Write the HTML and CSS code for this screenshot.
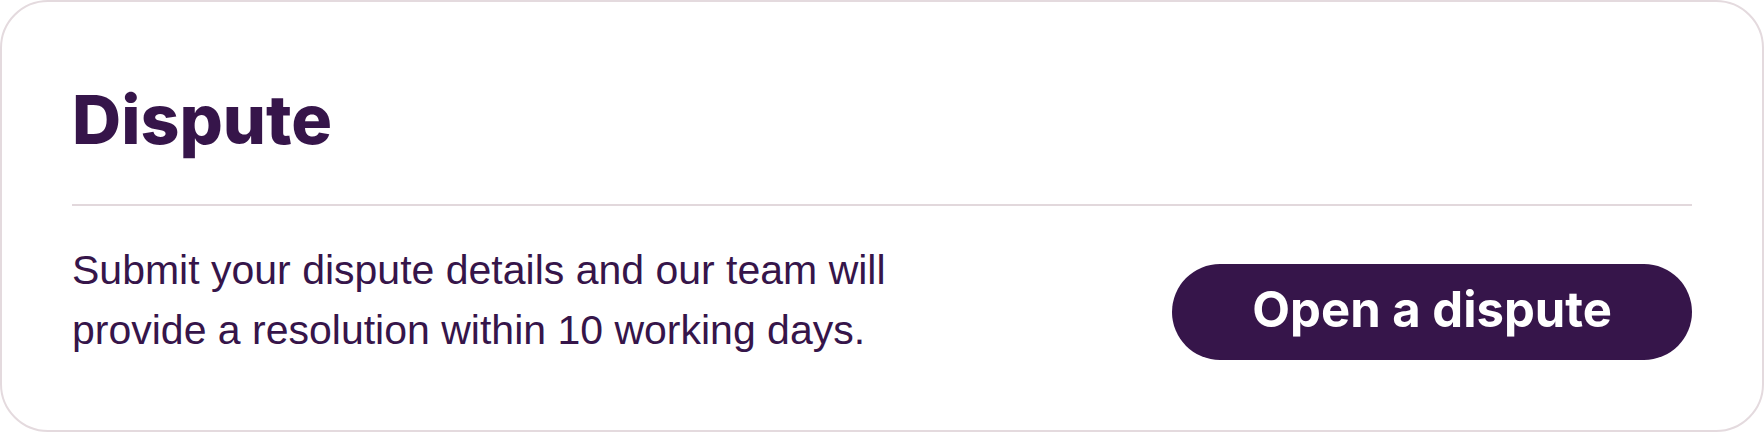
FILE: index.html
```
<!DOCTYPE html>
<html lang="en">
<head>
  <meta charset="UTF-8">
  <meta name="viewport" content="width=device-width, initial-scale=1.0">
  <title>Dispute</title>
  <link rel="stylesheet" href="styles.css">
</head>
<body>
  <section class="card">
    <h2 class="card-title">Dispute</h2>
    <div class="card-body">
      <p class="card-text">Submit your dispute details and our team will provide a resolution within 10 working days.</p>
      <button type="button" class="dispute-btn">Open a dispute</button>
    </div>
  </section>
</body>
</html>
```
FILE: styles.css
```
* {
  box-sizing: border-box;
}

body {
  margin: 0;
  background: #ffffff;
  color: #36154a;
  font-family: "Liberation Sans", Arial, sans-serif;
}

.card {
  min-height: 100vh;
  padding: 70px;
  border: 2px solid #e4dade;
  border-radius: 48px;
  background: #ffffff;
}

.card-title {
  margin: 0;
  padding-bottom: 38px;
  border-bottom: 2px solid #e2d8dc;
  font-family: Inter, Arial, sans-serif;
  font-size: 68px;
  font-weight: 800;
  line-height: 94px;
}

.card-body {
  display: flex;
  justify-content: space-between;
  align-items: flex-end;
  gap: 40px;
  padding-top: 34px;
}

.card-text {
  margin: 0;
  max-width: 850px;
  font-size: 41px;
  line-height: 60px;
}

.dispute-btn {
  flex-shrink: 0;
  padding: 0 80px 4px;
  border: none;
  border-radius: 48px;
  background: #36154a;
  color: #ffffff;
  font-family: Inter, Arial, sans-serif;
  font-size: 49px;
  font-weight: 700;
  line-height: 92px;
  cursor: pointer;
}
```
